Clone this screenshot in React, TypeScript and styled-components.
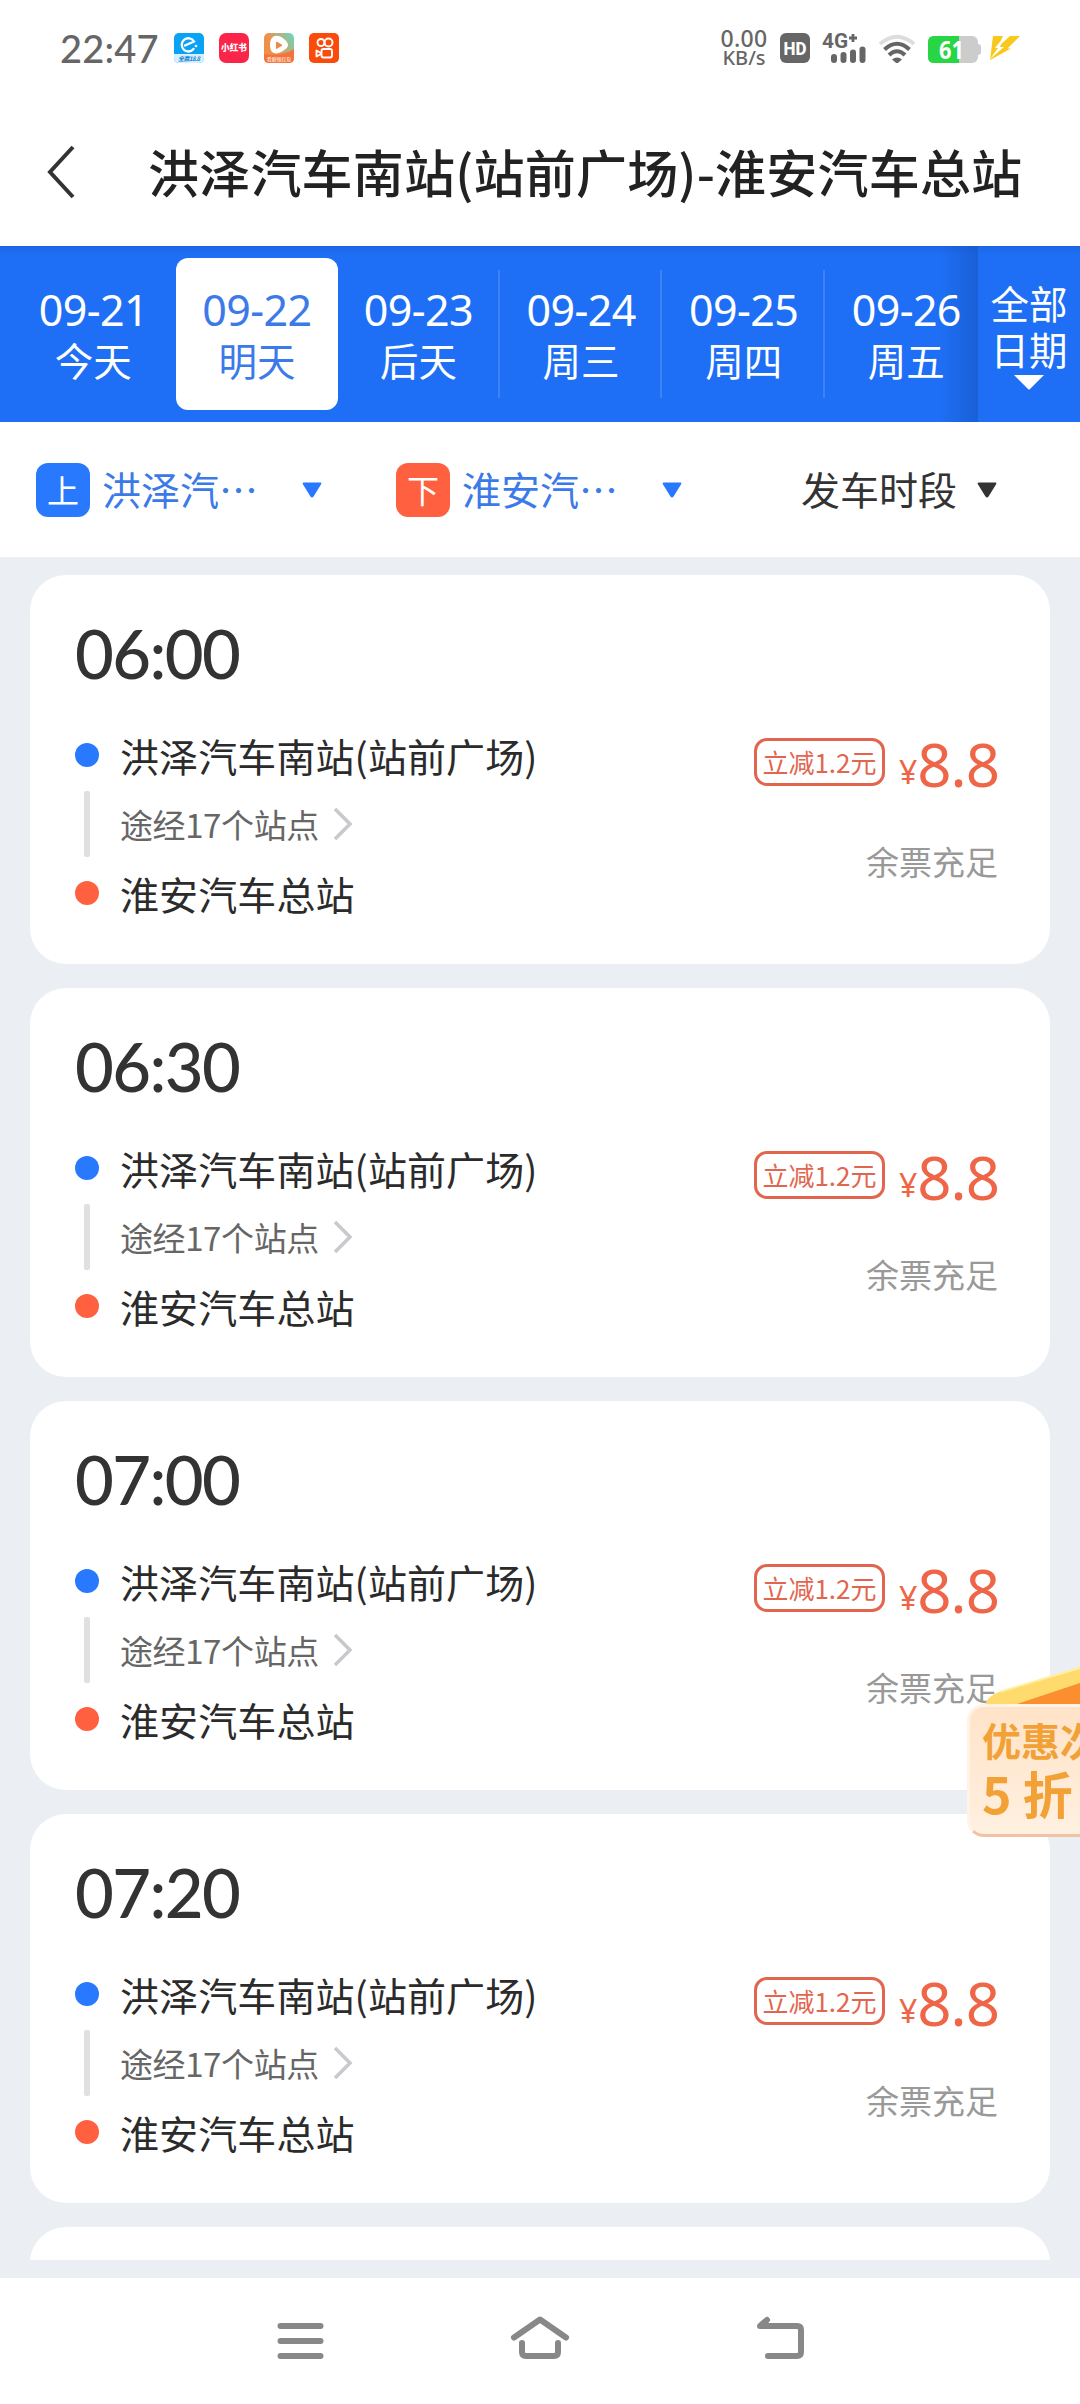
import React from "react";
import styled, { createGlobalStyle, css } from "styled-components";

const cjk = `"Noto Sans CJK SC", "Noto Sans", sans-serif`;

const GlobalStyle = createGlobalStyle`
  * { box-sizing: border-box; }
  body { margin: 0; background: #fff; font-family: ${cjk}; }
`;

const Screen = styled.div`
  position: relative;
  display: flex;
  flex-direction: column;
  width: 1080px;
  height: 2404px;
  overflow: hidden;
  background: #fff;
  color: #333;
  white-space: nowrap;
`;

/* ---------- status bar ---------- */
const StatusBar = styled.div`
  display: flex;
  align-items: flex-start;
  height: 96px;
  padding: 33px 58px 0 60px;
  color: #666;
`;

const Clock = styled.div`
  width: 114px;
  font: 500 38px/30px Lato, sans-serif;
  letter-spacing: 0.2px;
`;

const AppIcons = styled.div`
  display: flex;
  gap: 15px;
  flex: 1;
`;

const AppIcon = styled.svg`
  width: 30px;
  height: 30px;
`;

const StatusRight = styled.div`
  display: flex;
  align-items: flex-start;
`;

const Speed = styled.div`
  width: 60px;
  margin-top: -5px;
  text-align: center;
  font: 500 20px/20px "Noto Sans", sans-serif;
  margin-right: 6px;
  span { display: block; font-size: 23px; letter-spacing: 0.3px; line-height: 20px; }
`;

const StatusGlyphs = styled.svg`
  width: 242px;
  height: 34px;
`;

/* ---------- header ---------- */
const Header = styled.header`
  display: flex;
  align-items: center;
  height: 150px;
  padding: 2px 0 0 47px;
`;

const BackIcon = styled.svg`
  width: 30px;
  height: 56px;
  margin-right: 71px;
`;

const Title = styled.h1`
  margin: 0;
  padding-bottom: 2px;
  font-size: 51px;
  font-weight: 500;
  line-height: 70px;
  letter-spacing: 0.2px;
  color: #222;
`;

/* ---------- date strip ---------- */
const DateBar = styled.nav`
  display: flex;
  height: 176px;
  background: linear-gradient(#1c66e4, #1e6ff5 9px);
  color: #fff;
`;

const DateList = styled.div`
  flex: 1;
  display: flex;
  padding: 12px 0 12px 12px;
  overflow: hidden;
  background: linear-gradient(to right, transparent 940px, rgba(20, 80, 185, 0.5) 978px);
`;

const DateCell = styled.div<{ $active?: boolean; $divider?: boolean }>`
  position: relative;
  flex: 0 0 162.6px;
  display: flex;
  flex-direction: column;
  align-items: center;
  padding-top: 30px;
  border-radius: 12px;
  ${(p) => p.$active && css`
    background: #fff;
    color: #3b7ae8;
    left: 1px;
  `}
  ${(p) => p.$divider && css`
    &::after {
      content: "";
      position: absolute;
      right: 0;
      top: 12px;
      bottom: 12px;
      width: 2px;
      background: #3c82f8;
    }
  `}
`;

const DateNumber = styled.div`
  font: 400 43px/44px "Noto Sans", sans-serif;
  letter-spacing: -0.6px;
`;

const DayName = styled.div`
  margin-top: 5px;
  font-size: 38.5px;
  line-height: 44px;
`;

const AllDates = styled.div`
  width: 102px;
  display: flex;
  flex-direction: column;
  align-items: center;
  padding-top: 33px;
  font-size: 38.5px;
  line-height: 46px;
`;

const Down = styled.svg<{ $w: number; $h: number }>`
  flex: none;
  width: ${(p) => p.$w}px;
  height: ${(p) => p.$h}px;
`;

const AllDatesArrow = styled(Down)`
  margin-top: 3px;
`;

/* ---------- filters ---------- */
const Filters = styled.div`
  display: flex;
  align-items: center;
  height: 135px;
  padding-left: 36px;
`;

const Filter = styled.div<{ $tone: string; $width: number }>`
  display: flex;
  align-items: center;
  width: ${(p) => p.$width}px;
  font-size: 39px;
  line-height: 54px;
  color: ${(p) => p.$tone};
`;

const StopBadge = styled.span<{ $bg: string }>`
  width: 54px;
  height: 54px;
  margin-right: 12px;
  border-radius: 12px;
  background: ${(p) => p.$bg};
  color: #fff;
  font-size: 32px;
  line-height: 53px;
  text-align: center;
`;

const FilterText = styled.span<{ $width: number }>`
  width: ${(p) => p.$width}px;
  padding-bottom: 4px;
`;

/* ---------- trips ---------- */
const List = styled.main`
  height: 1721px;
  padding: 18px 30px;
  background: #ebeff4;
`;

const Viewport = styled.div`
  display: flex;
  flex-direction: column;
  gap: 24px;
  height: 1685px;
  overflow: hidden;
`;

const Card = styled.section`
  flex: 0 0 389px;
  display: flex;
  justify-content: space-between;
  padding: 42px 52px 0 45px;
  border-radius: 36px;
  background: #fff;
`;

const Time = styled.div`
  height: 72px;
  margin-bottom: 36px;
  font: 500 67px/72px Lato, sans-serif;
  letter-spacing: -1.6px;
`;

const Stop = styled.div`
  display: flex;
  align-items: center;
  height: 60px;
  font-size: 39px;
  line-height: 60px;
  letter-spacing: 0.1px;
  color: #2b2b2b;
`;

const StopName = styled.span`
  padding-bottom: 1px;
`;

const Dot = styled.i<{ $color: string }>`
  width: 24px;
  height: 24px;
  margin-right: 21px;
  border-radius: 50%;
  background: ${(p) => p.$color};
`;

const Via = styled.div`
  display: flex;
  align-items: center;
  height: 78px;
  font-size: 33px;
  letter-spacing: -0.4px;
  color: #666;
`;

const ViaLine = styled.i`
  width: 6px;
  height: 66px;
  margin: 0 30px 0 9px;
  border-radius: 2px;
  background: #e0e0e0;
`;

const Chevron = styled.svg`
  width: 20px;
  height: 34px;
  margin-left: 14px;
`;

const Fare = styled.div`
  display: flex;
  flex-direction: column;
  align-items: flex-end;
  padding-top: 121px;
`;

const PriceRow = styled.div`
  display: flex;
  align-items: flex-start;
  height: 48px;
  color: #ee6548;
`;

const Discount = styled.span`
  width: 131px;
  height: 48px;
  margin-right: 14px;
  border: 3px solid #e2664f;
  border-radius: 13px;
  color: #e2664f;
  font-size: 26px;
  line-height: 41px;
  text-align: center;
`;

const Yen = styled.span`
  font: 400 32px/48px "Noto Sans", sans-serif;
  padding-top: 10px;
`;

const Price = styled.span`
  margin-right: -1px;
  font: 400 60px/52px "Noto Sans", sans-serif;
  letter-spacing: -1px;
`;

const Seats = styled.div`
  margin-top: 51px;
  font-size: 33px;
  line-height: 48px;
  color: #999;
`;

/* ---------- floating coupon ---------- */
const Coupon = styled.aside`
  position: absolute;
  left: 967px;
  top: 1664px;
  width: 113px;
  height: 174px;
`;

const Flap = styled.svg`
  display: block;
  width: 113px;
  height: 40px;
`;

const CouponBody = styled.div`
  width: 180px;
  height: 133px;
  padding: 9px 0 0 12px;
  border: 3px solid #fff3e6;
  border-bottom-color: #f0c3a4;
  border-radius: 17px;
  background: linear-gradient(#ffe3c8, #fff0e0);
  color: #f2a136;
  font-weight: 700;
`;

const CouponTop = styled.div`
  font-size: 39px;
  line-height: 46px;
`;

const CouponBottom = styled.div`
  font-size: 50px;
  line-height: 60px;
`;

/* ---------- system navigation ---------- */
const SystemNav = styled.footer`
  flex: 1;
  display: flex;
  align-items: flex-start;
  justify-content: center;
  gap: 180px;
  padding-top: 32px;
`;

const NavIcon = styled.svg`
  width: 60px;
  height: 60px;
  fill: none;
  stroke: #888;
  stroke-width: 6px;
  stroke-linecap: round;
  stroke-linejoin: round;
`;

const days = [
  ["09-21", "今天"],
  ["09-22", "明天"],
  ["09-23", "后天"],
  ["09-24", "周三"],
  ["09-25", "周四"],
  ["09-26", "周五"],
];

const trips = ["06:00", "06:30", "07:00", "07:20"];

function Caret({ color }: { color: string }) {
  return (
    <Down $w={20} $h={16} viewBox="0 0 20 16">
      <path d="M1.500 1.500H18.500L10.800 14Q10 15 9.200 14Z" fill={color} stroke={color} strokeWidth="1.8" strokeLinejoin="round" />
    </Down>
  );
}

function Trip({ time }: { time: string }) {
  return (
    <Card>
      <div>
        <Time>{time}</Time>
        <Stop><Dot $color="#2979ff" /><StopName>洪泽汽车南站(站前广场)</StopName></Stop>
        <Via>
          <ViaLine /><StopName>途经17个站点</StopName>
          <Chevron viewBox="0 0 20 34"><path d="M2 2L17 17L2 32" fill="none" stroke="#c8c9cc" strokeWidth="3.5" /></Chevron>
        </Via>
        <Stop><Dot $color="#ff6040" /><StopName>淮安汽车总站</StopName></Stop>
      </div>
      <Fare>
        <PriceRow><Discount>立减1.2元</Discount><Yen>¥</Yen><Price>8.8</Price></PriceRow>
        <Seats>余票充足</Seats>
      </Fare>
    </Card>
  );
}

export default function App() {
  return (
    <Screen>
      <GlobalStyle />
      <StatusBar>
        <Clock>22:47</Clock>
        <AppIcons>
          <AppIcon viewBox="0 0 30 30">
            <defs><clipPath id="r1"><rect width="30" height="30" rx="5" /></clipPath></defs>
            <g clipPath="url(#r1)">
              <rect width="30" height="30" fill="#0aa2f5" />
              <rect y="21" width="30" height="9" fill="#d5f0ff" />
            </g>
            <path d="M11 12.500L20 8.500A6.600 6.600 0 1 0 19.500 16" fill="none" stroke="#fff" strokeWidth="2.3" strokeLinecap="round" />
            <circle cx="22" cy="13" r="1.300" fill="#fff" />
            <text x="15" y="28" textAnchor="middle" fontSize="6" fontWeight="700" fontStyle="italic" fill="#1580d0" fontFamily="Noto Sans CJK SC" textLength="22">全赢18.8</text>
          </AppIcon>
          <AppIcon viewBox="0 0 30 30">
            <rect width="30" height="30" rx="7" fill="#fb2549" />
            <text x="15" y="18.400" textAnchor="middle" fontSize="8.600" fontWeight="900" fill="#fff" fontFamily="Noto Sans CJK SC">小红书</text>
          </AppIcon>
          <AppIcon viewBox="0 0 30 30">
            <defs><linearGradient id="g" x1="0" y1="0.6" x2="1" y2="0"><stop offset="0.3" stopColor="#f09048" /><stop offset="1" stopColor="#62dcc8" /></linearGradient></defs>
            <rect width="30" height="30" rx="5" fill="url(#g)" />
            <path d="M0 21Q18 24 30 16V25Q30 30 25 30H5Q0 30 0 25Z" fill="#f4733c" />
            <path d="M6 12C6 1 14 1 20 6C26 11 25 14 19 18C11 23 6 20 6 12Z" fill="#fff" />
            <path d="M12.500 9V15.500L18 12.200Z" fill="#ee8848" stroke="#ee8848" strokeLinejoin="round" />
            <text x="15" y="28" textAnchor="middle" fontSize="4.800" fontWeight="700" fill="#ffd9c0" fontFamily="Noto Sans CJK SC">看剧领红包</text>
          </AppIcon>
          <AppIcon viewBox="0 0 30 30">
            <rect width="30" height="30" rx="5" fill="#fa4a0c" />
            <g fill="none" stroke="#fff" strokeWidth="1.9" strokeLinejoin="round">
              <circle cx="12" cy="9.500" r="3.500" /><circle cx="19.500" cy="9.500" r="4" />
              <rect x="12.500" y="16" width="10.500" height="8.500" rx="2" /><path d="M12 20L7.500 17.500V23.500L12 21" />
            </g>
          </AppIcon>
        </AppIcons>
        <StatusRight>
          <Speed><span>0.00</span>KB/s</Speed>
          <StatusGlyphs viewBox="780 33 242 34">
            <rect x="780" y="33" width="30" height="30" rx="6" fill="#666" />
            <text x="783.500" y="54.500" fontSize="18" fontWeight="800" fill="#fff" fontFamily="Roboto" textLength="23" lengthAdjust="spacingAndGlyphs">HD</text>
            <text x="822" y="48" fontSize="20" fontWeight="700" fill="#666" fontFamily="Roboto" textLength="26" lengthAdjust="spacingAndGlyphs">4G</text>
            <path d="M853 34V42M849 38H857" stroke="#666" strokeWidth="2.800" />
            <g stroke="#666" strokeWidth="6" strokeLinecap="round">
              <path d="M834 57V60M843.500 55V60M853 52.500V60M862.500 49.500V60" />
            </g>
            <g fill="none" strokeWidth="4">
              <path d="M880 44Q897 29.500 914 44" stroke="#ddd" />
              <path d="M884.500 49.500Q897 38 909.500 49.500" stroke="#666" />
              <path d="M889 55Q897 47.500 905 55" stroke="#666" />
            </g>
            <path d="M892 59.500Q897 55.500 902 59.500L898.500 62.500Q897 63.500 895.500 62.500Z" fill="#666" />
            <rect x="928" y="36" width="50" height="27" rx="6" fill="#ccc" />
            <path d="M978 44Q981 44 981 47V52Q981 55 978 55Z" fill="#ccc" />
            <path d="M934 36H959V63H934Q928 63 928 57V42Q928 36 934 36Z" fill="#27d545" />
            <text x="939" y="58.500" fontSize="25" fontWeight="700" fill="#fff" fontFamily="Noto Sans" textLength="25" lengthAdjust="spacingAndGlyphs">61</text>
            <path d="M993 36H1003L998 47L1010 36H1020L1007.500 48.500H1011L990 60Z" fill="#f8c91c" />
            <path d="M990 59L998 48H995L1003 38L1000 47H1004Z" fill="#fff" />
          </StatusGlyphs>
        </StatusRight>
      </StatusBar>

      <Header>
        <BackIcon viewBox="0 0 30 56"><path d="M26 3L3 28L26 53" fill="none" stroke="#333" strokeWidth="4" /></BackIcon>
        <Title>洪泽汽车南站(站前广场)-淮安汽车总站</Title>
      </Header>

      <DateBar>
        <DateList>
          {days.map(([date, day], i) => (
            <DateCell key={date} $active={i === 1} $divider={i > 1 && i < 5}>
              <DateNumber>{date}</DateNumber>
              <DayName>{day}</DayName>
            </DateCell>
          ))}
        </DateList>
        <AllDates>
          <span>全部</span>
          <span>日期</span>
          <AllDatesArrow $w={30} $h={16} viewBox="0 0 30 16"><path d="M0 1H30L16 15Q15 16 14 15Z" fill="#fff" /></AllDatesArrow>
        </AllDates>
      </DateBar>

      <Filters>
        <Filter $tone="#3b7ae8" $width={360}>
          <StopBadge $bg="#2979ff">上</StopBadge>
          <FilterText $width={200}>洪泽汽…</FilterText>
          <Caret color="#2979ff" />
        </Filter>
        <Filter $tone="#3b7ae8" $width={405}>
          <StopBadge $bg="#ff6040">下</StopBadge>
          <FilterText $width={200}>淮安汽…</FilterText>
          <Caret color="#2979ff" />
        </Filter>
        <Filter $tone="#333" $width={200}>
          <FilterText $width={176}>发车时段</FilterText>
          <Caret color="#333" />
        </Filter>
      </Filters>

      <List>
        <Viewport>
          {trips.map((time) => <Trip key={time} time={time} />)}
          <Card />
        </Viewport>
      </List>

      <SystemNav>
        <NavIcon viewBox="0 0 60 60"><path d="M10.500 16H50.500M10.500 31H50.500M10.500 46H50.500" /></NavIcon>
        <NavIcon viewBox="0 0 60 60"><path d="M4 27.500L30 9.500L56 27.500M12 33V42Q12 46 16 46H44Q48 46 48 42V33" /></NavIcon>
        <NavIcon viewBox="0 0 60 60"><path d="M18 46H47Q51 46 51 42V20Q51 16 47 16H10L17 10" /></NavIcon>
      </SystemNav>

      <Coupon>
        <Flap viewBox="0 0 113 40">
          <path d="M42 40L113 16V40Z" fill="#fb8f30" />
          <path d="M18 40Q21 32 34 27L113 3V19L50 40Z" fill="#ffdb6e" />
          <path d="M34 27.500L113 4" stroke="#fff0a0" strokeWidth="2" />
        </Flap>
        <CouponBody>
          <CouponTop>优惠次</CouponTop>
          <CouponBottom>5 折</CouponBottom>
        </CouponBody>
      </Coupon>
    </Screen>
  );
}
